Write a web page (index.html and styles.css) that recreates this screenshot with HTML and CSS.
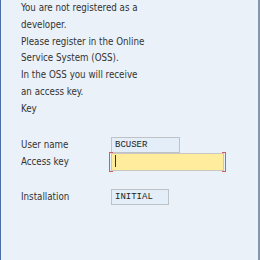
FILE: index.html
```html
<!DOCTYPE html>
<html lang="en">
<head>
    <meta charset="UTF-8">
    <title>Developer Key</title>
    <link rel="stylesheet" href="styles.css">
</head>
<body>
    <div class="dialog">
        <div class="message">
            <div>You are not registered as a</div>
            <div>developer.</div>
            <div>Please register in the Online</div>
            <div>Service System (OSS).</div>
            <div>In the OSS you will receive</div>
            <div>an access key.</div>
            <div>Key</div>
        </div>

        <div class="form">
            <div class="row">
                <span class="label">User name</span>
                <span class="field field-user">BCUSER</span>
            </div>
            <div class="row row-key">
                <span class="label">Access key</span>
                <span class="field field-key"><span class="caret"></span></span>
            </div>
            <div class="row row-install">
                <span class="label">Installation</span>
                <span class="field field-install">INITIAL</span>
            </div>
        </div>
    </div>
</body>
</html>
```

FILE: styles.css
```css
html, body {
    margin: 0;
    padding: 0;
}
body {
    background-color: #eaf1f8;
    font-family: "DejaVu Sans Condensed", "DejaVu Sans", sans-serif;
    font-size: 9.7px;
    color: #333;
}
.dialog {
    box-sizing: border-box;
    height: 260px;
    border-left: 1px solid #4a6fa8;
    border-right: 2px solid #8595ae;
    padding-left: 20px;
}
.message {
    line-height: 16.8px;
}
.form {
    margin-top: 19px;
}
.row {
    display: flex;
    align-items: center;
}
.label {
    width: 90px;
}
.field {
    box-sizing: border-box;
    height: 16px;
    border: 1px solid #bfc3c8;
    background-color: #e3eef8;
    font-family: "Liberation Mono", monospace;
    font-size: 9px;
    color: #222;
    padding-left: 3px;
    line-height: 14px;
}
.field-user {
    width: 69px;
}
.field-key {
    position: relative;
    width: 113px;
    height: 18px;
    background-color: #ffec9c;
    border-color: #c8c8c0;
}
.field-key::before,
.field-key::after {
    content: "";
    position: absolute;
    top: -2px;
    bottom: -2px;
    width: 3px;
    border-top: 1px solid #e0555a;
    border-bottom: 1px solid #e0555a;
}
.field-key::before {
    left: -3px;
    border-left: 1px solid #e0555a;
}
.field-key::after {
    right: -3px;
    border-right: 1px solid #e0555a;
}
.caret {
    display: inline-block;
    width: 1px;
    height: 12px;
    margin-top: 1px;
    background-color: #333;
}
.row-install {
    margin-top: 18px;
}
.field-install {
    width: 58px;
}
```
